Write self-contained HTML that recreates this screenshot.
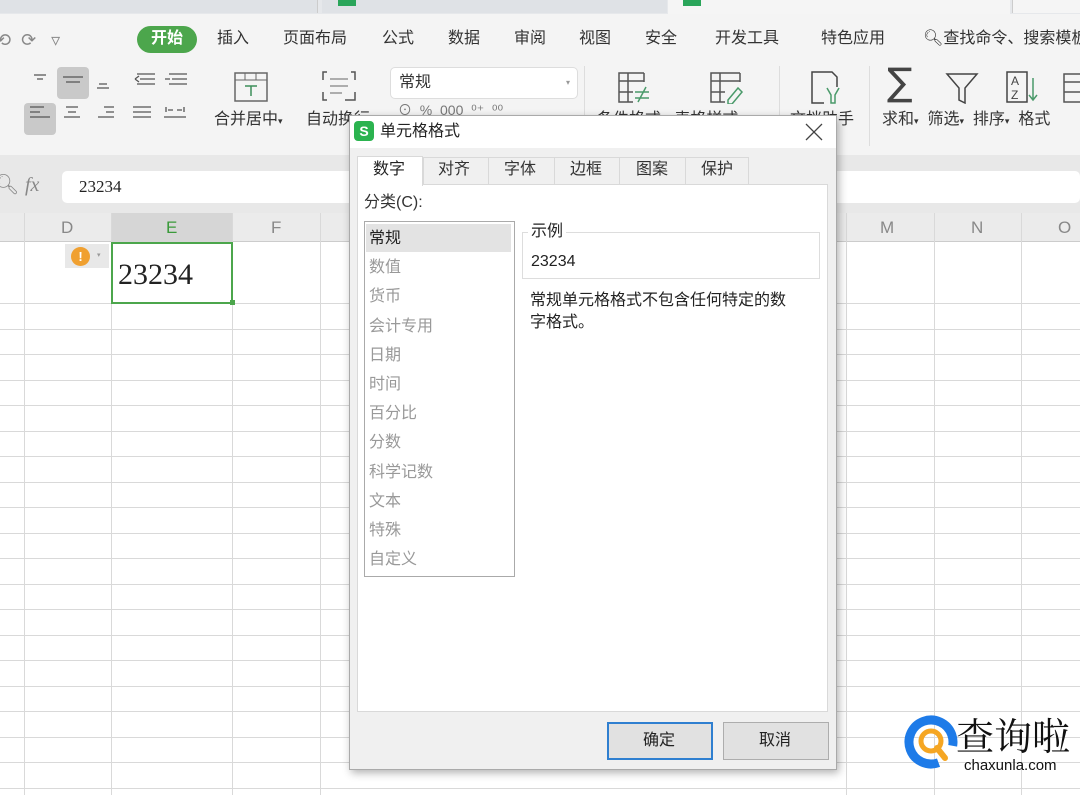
<!DOCTYPE html>
<html><head><meta charset="utf-8">
<style>
*{margin:0;padding:0;box-sizing:border-box}
body{width:1080px;height:795px;overflow:hidden;position:relative;background:#fff;font-family:"Liberation Sans","Noto Sans CJK SC",sans-serif;color:#333}
.a{position:absolute}
.t{font-size:16px;white-space:nowrap;line-height:1.05}
.g{color:#888}
</style></head><body>
<!-- tab strip -->
<div class="a" style="left:0;top:0;width:1080px;height:14px;background:#e6e8eb"></div>
<div class="a" style="left:0;top:0;width:318px;height:13px;background:#dfe2e6;border-right:1px solid #ccc"></div>
<div class="a" style="left:322px;top:0;width:345px;height:13px;background:#dfe2e6"></div>
<div class="a" style="left:338px;top:0;width:18px;height:6px;background:#2aa55a"></div>
<div class="a" style="left:668px;top:0;width:342px;height:15px;background:#f5f5f5"></div>
<div class="a" style="left:683px;top:0;width:18px;height:6px;background:#2aa55a"></div>
<div class="a" style="left:1012px;top:0;width:68px;height:13px;background:#f5f5f5;border-left:1px solid #ccc"></div>
<!-- menu row -->
<div class="a" style="left:0;top:14px;width:1080px;height:141px;background:#f4f4f4"></div>
<div class="a t g" style="left:-4px;top:31px;font-size:18px">⟲ &nbsp;⟳ &nbsp;&nbsp;▿</div>
<div class="a" style="left:137px;top:26px;width:60px;height:27px;border-radius:14px;background:#4ca64c"></div>
<div class="a t" style="left:151px;top:31px;color:#fff;font-weight:bold">开始</div>
<div class="a t" style="left:217px;top:31px">插入</div>
<div class="a t" style="left:283px;top:31px">页面布局</div>
<div class="a t" style="left:382px;top:31px">公式</div>
<div class="a t" style="left:448px;top:31px">数据</div>
<div class="a t" style="left:514px;top:31px">审阅</div>
<div class="a t" style="left:579px;top:31px">视图</div>
<div class="a t" style="left:645px;top:31px">安全</div>
<div class="a t" style="left:715px;top:31px">开发工具</div>
<div class="a t" style="left:821px;top:31px">特色应用</div>
<div class="a t" style="left:923px;top:31px">🔍︎查找命令、搜索模板</div>
<!-- align icons -->
<div class="a" style="left:57px;top:67px;width:32px;height:32px;background:#c9c9c9;border-radius:4px"></div>
<div class="a" style="left:24px;top:103px;width:32px;height:32px;background:#c9c9c9;border-radius:4px"></div>
<svg class="a" style="left:0;top:60px" width="200" height="80" stroke="#555" stroke-width="1.3" fill="none">
<path d="M34 15h12M37 19h6"/><path d="M63 17h20M66 22h14"/><path d="M99 24h8M97 28h12"/>
<path d="M137 14h18M140 19h15M137 24h18M135 19l4-3M135 19l4 3"/>
<path d="M169 14h18M172 19h15M169 24h18M165 19h5"/>
<path d="M30 47h14M30 52h10M30 57h20"/><path d="M66 47h12M68 52h8M64 57h16"/>
<path d="M104 47h10M106 52h8M98 57h16"/><path d="M133 47h18M133 52h18M133 57h18"/>
<path d="M166 47v5M184 47v5M168 50h5M177 50h5M164 57h22"/>
</svg>
<svg class="a" style="left:234px;top:72px" width="34" height="32"><rect x="1" y="1" width="32" height="28" fill="none" stroke="#666" stroke-width="1.5"/><line x1="1" y1="8" x2="33" y2="8" stroke="#666"/><line x1="11" y1="1" x2="11" y2="8" stroke="#666"/><line x1="22" y1="1" x2="22" y2="8" stroke="#666"/><path d="M11 14h12M17 14v10" stroke="#3c8f5a" stroke-width="1.5"/></svg>
<div class="a t" style="left:214px;top:112px">合并居中<span style="font-size:9px">▾</span></div>
<svg class="a" style="left:321px;top:70px" width="36" height="32"><path d="M6 2H2v8M30 2h4v8M2 22v8h4M34 22v8h-10" stroke="#555" stroke-width="1.5" fill="none"/><path d="M9 9h18M9 16h18M9 23h12" stroke="#666"/></svg>
<div class="a t" style="left:306px;top:112px">自动换行</div>
<div class="a t g" style="left:398px;top:103px;font-size:14px;color:#777">⊙ &nbsp;% &nbsp;000 &nbsp;⁰⁺ &nbsp;⁰⁰</div>
<div class="a" style="left:390px;top:67px;width:188px;height:32px;background:#fff;border:1px solid #ddd;border-radius:5px"></div>
<div class="a t" style="left:399px;top:75px">常规</div>
<div class="a" style="left:566px;top:78px;font-size:8px;color:#999">▾</div>
<div class="a" style="left:584px;top:66px;width:1px;height:80px;background:#ddd"></div>
<div class="a" style="left:779px;top:66px;width:1px;height:80px;background:#ddd"></div>
<div class="a" style="left:869px;top:66px;width:1px;height:80px;background:#ddd"></div>
<svg class="a" style="left:618px;top:72px" width="36" height="32"><path d="M26 1H1v29h14M1 9h25M1 20h14M10 1v29M26 1v9" stroke="#555" stroke-width="1.5" fill="none"/><path d="M17 20h14M17 26h14M28 15l-8 15" stroke="#4a9a6a" stroke-width="1.5"/></svg>
<svg class="a" style="left:710px;top:72px" width="36" height="32"><path d="M30 1H1v29h14M1 9h29M1 20h14M10 1v29M30 1v9" stroke="#555" stroke-width="1.5" fill="none"/><path d="M18 28l10-12 4 4-10 12h-4z" stroke="#4a9a6a" stroke-width="1.5" fill="none"/></svg>
<div class="a t" style="left:597px;top:112px">条件格式 &nbsp;&nbsp;表格样式</div>
<svg class="a" style="left:810px;top:70px" width="32" height="36"><path d="M14 33H2V2h20l5 5v10" stroke="#444" stroke-width="1.5" fill="none"/><path d="M17 18l4 7v8h4v-8l4-7" stroke="#4a9a6a" stroke-width="1.5" fill="none"/></svg>
<div class="a t" style="left:790px;top:112px">文档助手</div>
<div class="a" style="left:887px;top:62px;font-size:38px;color:#444;font-family:'DejaVu Sans';line-height:1.1">∑</div>
<svg class="a" style="left:945px;top:72px" width="34" height="32"><path d="M2 2h30L20 16v15l-6-3V16z" stroke="#444" stroke-width="1.5" fill="none"/></svg>
<svg class="a" style="left:1005px;top:70px" width="36" height="34"><rect x="2" y="2" width="20" height="30" fill="none" stroke="#444" stroke-width="1.5"/><text x="6" y="15" font-size="12" fill="#444" font-family="Liberation Sans">A</text><text x="6" y="29" font-size="12" fill="#444" font-family="Liberation Sans">Z</text><path d="M28 8v22M24 25l4 5 4-5" stroke="#4a9a6a" stroke-width="1.5" fill="none"/></svg>
<svg class="a" style="left:1062px;top:72px" width="20" height="32"><path d="M20 2H2v28h18M2 10h18M2 20h18" stroke="#555" stroke-width="1.5" fill="none"/></svg>
<div class="a t" style="left:882px;top:112px">求和<span style="font-size:9px">▾</span> &nbsp;筛选<span style="font-size:9px">▾</span> &nbsp;排序<span style="font-size:9px">▾</span> &nbsp;格式</div>
<!-- formula bar -->
<div class="a" style="left:0;top:155px;width:1080px;height:58px;background:#e8e8e8"></div>
<div class="a" style="left:62px;top:171px;width:1018px;height:32px;background:#fff;border-radius:5px"></div>
<div class="a t g" style="left:-6px;top:175px;font-size:20px">🔍︎ <i style="font-family:'Liberation Serif'">fx</i></div>
<div class="a" style="left:79px;top:177px;font-family:'Liberation Serif';font-size:17px;color:#222">23234</div>
<!-- header row -->
<div class="a" style="left:0;top:213px;width:1080px;height:29px;background:#ebebeb;border-bottom:1px solid #ccc"></div>
<div class="a" style="left:111px;top:213px;width:122px;height:29px;background:#d6d6d6"></div>
<!-- grid -->
<svg class="a" style="left:0;top:213px" width="1080" height="582">
<g stroke="#d9d9d9" stroke-width="1">
<line x1="24.5" y1="0" x2="24.5" y2="582"/><line x1="111.5" y1="0" x2="111.5" y2="582"/><line x1="232.5" y1="0" x2="232.5" y2="582"/><line x1="320.5" y1="0" x2="320.5" y2="582"/><line x1="846.5" y1="0" x2="846.5" y2="582"/><line x1="934.5" y1="0" x2="934.5" y2="582"/><line x1="1021.5" y1="0" x2="1021.5" y2="582"/>
<line x1="0" y1="90.5" x2="1080" y2="90.5"/><line x1="0" y1="116.5" x2="1080" y2="116.5"/><line x1="0" y1="141.5" x2="1080" y2="141.5"/><line x1="0" y1="167.5" x2="1080" y2="167.5"/><line x1="0" y1="192.5" x2="1080" y2="192.5"/><line x1="0" y1="218.5" x2="1080" y2="218.5"/><line x1="0" y1="243.5" x2="1080" y2="243.5"/><line x1="0" y1="269.5" x2="1080" y2="269.5"/><line x1="0" y1="294.5" x2="1080" y2="294.5"/><line x1="0" y1="320.5" x2="1080" y2="320.5"/><line x1="0" y1="345.5" x2="1080" y2="345.5"/><line x1="0" y1="371.5" x2="1080" y2="371.5"/><line x1="0" y1="396.5" x2="1080" y2="396.5"/><line x1="0" y1="422.5" x2="1080" y2="422.5"/><line x1="0" y1="447.5" x2="1080" y2="447.5"/><line x1="0" y1="473.5" x2="1080" y2="473.5"/><line x1="0" y1="498.5" x2="1080" y2="498.5"/><line x1="0" y1="524.5" x2="1080" y2="524.5"/><line x1="0" y1="549.5" x2="1080" y2="549.5"/><line x1="0" y1="575.5" x2="1080" y2="575.5"/>
</g></svg>
<div class="a t g" style="left:61px;top:219px;font-size:17px">D</div>
<div class="a t" style="left:166px;top:219px;font-size:17px;color:#3a9a3a">E</div>
<div class="a t g" style="left:271px;top:219px;font-size:17px">F</div>
<div class="a t g" style="left:880px;top:219px;font-size:17px">M</div>
<div class="a t g" style="left:971px;top:219px;font-size:17px">N</div>
<div class="a t g" style="left:1058px;top:219px;font-size:17px">O</div>
<div class="a" style="left:65px;top:244px;width:44px;height:24px;background:#e8e8e8"></div>
<div class="a" style="left:71px;top:247px;width:19px;height:19px;border-radius:50%;background:#f0a030;color:#fff;font-size:13px;font-weight:bold;text-align:center;line-height:19px">!</div>
<div class="a" style="left:97px;top:251px;font-size:7px;color:#999">▾</div>
<div class="a" style="left:111px;top:242px;width:122px;height:62px;border:2px solid #4ca64c"></div>
<div class="a" style="left:230px;top:300px;width:5px;height:5px;background:#4ca64c"></div>
<div class="a" style="left:118px;top:258px;font-family:'Liberation Serif';font-size:30px;color:#222">23234</div>
<!-- dialog -->
<div class="a" style="left:349px;top:115px;width:488px;height:655px;background:#f0f0f0;border:1px solid #aaa;box-shadow:2px 3px 8px rgba(0,0,0,.3)"></div>
<div class="a" style="left:350px;top:116px;width:486px;height:32px;background:#fff"></div>
<div class="a" style="left:354px;top:121px;width:20px;height:20px;border-radius:4px;background:#2bb34f;color:#fff;font-size:14px;font-weight:bold;text-align:center;line-height:20px">S</div>
<div class="a t" style="left:380px;top:124px;color:#222">单元格格式</div>
<svg class="a" style="left:805px;top:123px" width="18" height="18"><path d="M1 1l16 16M17 1L1 17" stroke="#444" stroke-width="1.3"/></svg>
<div class="a" style="left:357px;top:184px;width:471px;height:528px;background:#fff;border:1px solid #d9d9d9"></div>
<div class="a" style="left:357px;top:156px;width:66px;height:30px;background:#fff;border:1px solid #d9d9d9;border-bottom:none"></div>
<div class="a" style="left:423px;top:157px;width:326px;height:27px;background:#f0f0f0;border:1px solid #d9d9d9;border-bottom:none"></div>
<div class="a" style="left:488px;top:157px;width:1px;height:27px;background:#d9d9d9"></div>
<div class="a" style="left:554px;top:157px;width:1px;height:27px;background:#d9d9d9"></div>
<div class="a" style="left:619px;top:157px;width:1px;height:27px;background:#d9d9d9"></div>
<div class="a" style="left:685px;top:157px;width:1px;height:27px;background:#d9d9d9"></div>
<div class="a t" style="left:373px;top:162px;color:#222">数字</div>
<div class="a t" style="left:438px;top:162px">对齐</div>
<div class="a t" style="left:504px;top:162px">字体</div>
<div class="a t" style="left:570px;top:162px">边框</div>
<div class="a t" style="left:636px;top:162px">图案</div>
<div class="a t" style="left:701px;top:162px">保护</div>
<div class="a t" style="left:364px;top:195px">分类(C):</div>
<div class="a" style="left:364px;top:221px;width:151px;height:356px;border:1px solid #aaa;background:#fff"></div>
<div class="a" style="left:366px;top:224px;width:145px;height:28px;background:#e3e3e3"></div>
<div class="a" style="left:369px;top:224px;font-size:16px;line-height:29.2px;color:#999">
<div style="color:#222">常规</div><div>数值</div><div>货币</div><div>会计专用</div><div>日期</div><div>时间</div><div>百分比</div><div>分数</div><div>科学记数</div><div>文本</div><div>特殊</div><div>自定义</div></div>
<div class="a" style="left:522px;top:232px;width:298px;height:47px;border:1px solid #ddd"></div>
<div class="a t" style="left:528px;top:224px;background:#fff;padding:0 3px;color:#222">示例</div>
<div class="a t" style="left:531px;top:254px;color:#222">23234</div>
<div class="a t" style="left:530px;top:290px;color:#222;line-height:22px">常规单元格格式不包含任何特定的数<br>字格式。</div>
<div class="a" style="left:607px;top:722px;width:106px;height:38px;background:#e1e1e1;border:2px solid #2f7fd0"></div>
<div class="a t" style="left:643px;top:733px;color:#222">确定</div>
<div class="a" style="left:723px;top:722px;width:106px;height:38px;background:#e1e1e1;border:1px solid #adadad"></div>
<div class="a t" style="left:759px;top:733px;color:#222">取消</div>
<!-- watermark -->
<svg class="a" style="left:903px;top:712px" width="60" height="62"><circle cx="28" cy="30" r="22" fill="none" stroke="#1e7be8" stroke-width="9" stroke-dasharray="115 30" transform="rotate(70 28 30)"/><circle cx="28" cy="29" r="10" fill="none" stroke="#f5a623" stroke-width="5"/><path d="M34 36l8 10" stroke="#f5a623" stroke-width="6" stroke-linecap="round"/></svg>
<div class="a" style="left:956px;top:710px;font-size:38px;font-family:'Noto Serif CJK SC',serif;color:#111;line-height:48px">查询啦</div>
<div class="a" style="left:964px;top:757px;font-size:15px;color:#111;font-family:'Liberation Sans Narrow','Liberation Sans',sans-serif">chaxunla.com</div>
</body></html>
